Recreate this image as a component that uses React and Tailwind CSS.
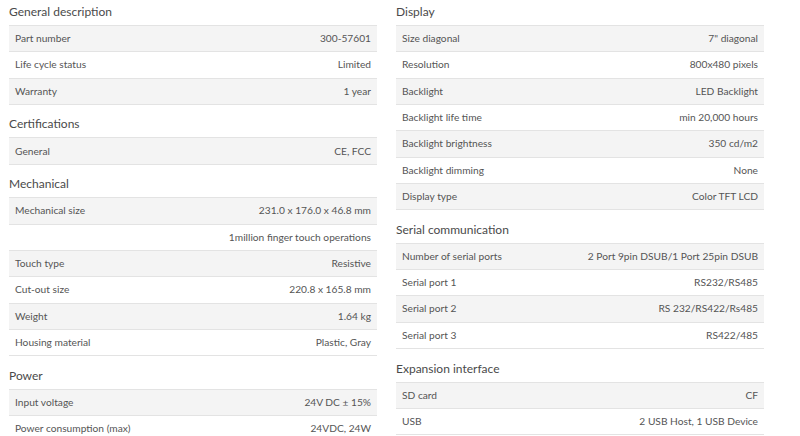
import React from "react";

const left = [
  { title: "General description", rows: [["Part number", "300-57601"], ["Life cycle status", "Limited"], ["Warranty", "1 year"]] },
  { title: "Certifications", rows: [["General", "CE, FCC"]] },
  {
    title: "Mechanical",
    rows: [
      ["Mechanical size", "231.0 x 176.0 x 46.8 mm"],
      ["", "1million finger touch operations"],
      ["Touch type", "Resistive"],
      ["Cut-out size", "220.8 x 165.8 mm"],
      ["Weight", "1.64 kg"],
      ["Housing material", "Plastic, Gray"],
    ],
  },
  { title: "Power", rows: [["Input voltage", "24V DC ± 15%"], ["Power consumption (max)", "24VDC, 24W"]] },
];

const right = [
  {
    title: "Display",
    rows: [
      ["Size diagonal", "7\" diagonal"],
      ["Resolution", "800x480 pixels"],
      ["Backlight", "LED Backlight"],
      ["Backlight life time", "min 20,000 hours"],
      ["Backlight brightness", "350 cd/m2"],
      ["Backlight dimming", "None"],
      ["Display type", "Color TFT LCD"],
    ],
  },
  {
    title: "Serial communication",
    rows: [
      ["Number of serial ports", "2 Port 9pin DSUB/1 Port 25pin DSUB"],
      ["Serial port 1", "RS232/RS485"],
      ["Serial port 2", "RS 232/RS422/Rs485"],
      ["Serial port 3", "RS422/485"],
    ],
  },
  { title: "Expansion interface", rows: [["SD card", "CF"], ["USB", "2 USB Host, 1 USB Device"]] },
];

function Section({ s, first }) {
  return (
    <div className={first ? "" : "mt-[7.5px]"}>
      <div className="h-[25px] flex items-center pb-[1px] text-[12px] text-[#4a4a4a]">{s.title}</div>
      <div className="border-t border-[#e3e3e3]">
        {s.rows.map((r, i) => (
          <div
            key={i}
            className={`h-[26.33px] flex items-center justify-between px-[6px] border-b border-[#e3e3e3] text-[10.2px] text-[#555] ${
              i % 2 === 0 ? "bg-[#f4f4f4]" : "bg-white"
            }`}
          >
            <span>{r[0]}</span>
            <span>{r[1]}</span>
          </div>
        ))}
      </div>
    </div>
  );
}

export default function App() {
  return (
    <div className="w-[800px] h-[436px] overflow-hidden bg-white flex gap-[19px] pl-[9px]" style={{ fontFamily: "Lato, 'Liberation Sans', sans-serif" }}>
      <div className="w-[368px] flex flex-col">
        {left.map((s, i) => (
          <Section key={i} s={s} first={i === 0} />
        ))}
      </div>
      <div className="w-[368px] flex flex-col">
        {right.map((s, i) => (
          <Section key={i} s={s} first={i === 0} />
        ))}
      </div>
    </div>
  );
}
